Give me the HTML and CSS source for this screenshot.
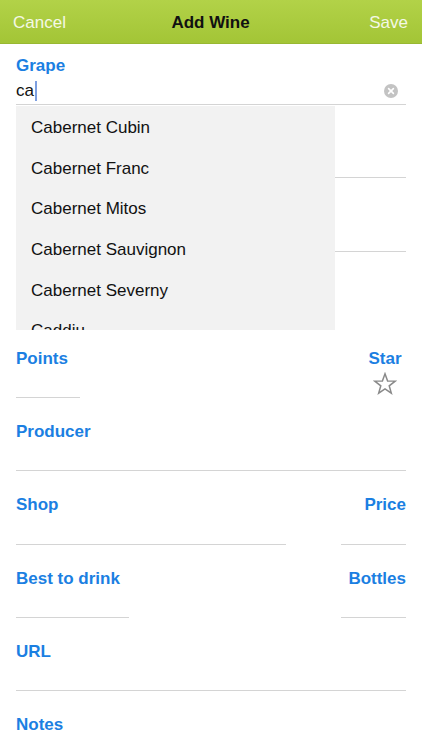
FILE: index.html
```html
<!DOCTYPE html>
<html>
<head>
<meta charset="utf-8">
<link rel="stylesheet" href="styles.css">
</head>
<body>
<div class="app">
  <header class="navbar">
    <span class="nav-btn nav-left">Cancel</span>
    <span class="nav-title">Add Wine</span>
    <span class="nav-btn nav-right">Save</span>
  </header>

  <main class="form">
    <div class="row row-first">
      <div class="field field-full">
        <div class="label">Grape</div>
        <div class="input input-first">
          <span class="value">ca</span><span class="caret"></span>
          <span class="spacer"></span>
          <svg class="clear" width="14" height="14" viewBox="0 0 14 14"><circle cx="7" cy="7" r="7" fill="#c3c3c3"/><path d="M4.6 4.6 L9.4 9.4 M9.4 4.6 L4.6 9.4" stroke="#fff" stroke-width="1.6" stroke-linecap="round"/></svg>
        </div>
      </div>
    </div>

    <div class="row">
      <div class="field field-full">
        <div class="label"></div>
        <div class="input"></div>
      </div>
    </div>

    <div class="row">
      <div class="field field-full">
        <div class="label"></div>
        <div class="input"></div>
      </div>
    </div>

    <div class="row">
      <div class="field field-short">
        <div class="label"></div>
        <div class="input"></div>
      </div>
    </div>

    <div class="row">
      <div class="field field-short">
        <div class="label">Points</div>
        <div class="input"></div>
      </div>
      <div class="field field-star">
        <div class="label">Star</div>
        <svg class="star" width="24" height="24" viewBox="0 0 24 24"><path d="M12 1.8 L14.6 8.9 L22.2 9.1 L16.2 13.8 L18.3 21.1 L12 16.8 L5.7 21.1 L7.8 13.8 L1.8 9.1 L9.4 8.9 Z" fill="none" stroke="#8a8a8a" stroke-width="1.5" stroke-linejoin="miter"/></svg>
      </div>
    </div>

    <div class="row">
      <div class="field field-full">
        <div class="label">Producer</div>
        <div class="input"></div>
      </div>
    </div>

    <div class="row">
      <div class="field field-shop">
        <div class="label">Shop</div>
        <div class="input"></div>
      </div>
      <div class="field field-right">
        <div class="label label-right">Price</div>
        <div class="input"></div>
      </div>
    </div>

    <div class="row">
      <div class="field field-best">
        <div class="label">Best to drink</div>
        <div class="input"></div>
      </div>
      <div class="field field-right">
        <div class="label label-right">Bottles</div>
        <div class="input"></div>
      </div>
    </div>

    <div class="row">
      <div class="field field-full">
        <div class="label">URL</div>
        <div class="input"></div>
      </div>
    </div>

    <div class="row">
      <div class="field field-full">
        <div class="label">Notes</div>
        <div class="input"></div>
      </div>
    </div>
  </main>

  <ul class="suggestions">
    <li>Cabernet Cubin</li>
    <li>Cabernet Franc</li>
    <li>Cabernet Mitos</li>
    <li>Cabernet Sauvignon</li>
    <li>Cabernet Severny</li>
    <li>Caddiu</li>
  </ul>
</div>
</body>
</html>
```

FILE: styles.css
```css
* { box-sizing: border-box; }

html, body {
  margin: 0;
  padding: 0;
  background: #ffffff;
}

body {
  font-family: "Liberation Sans", Arial, sans-serif;
  width: 422px;
  height: 750px;
  overflow: hidden;
}

.app {
  position: relative;
  width: 422px;
  height: 750px;
  overflow: hidden;
}

.navbar {
  height: 44px;
  display: grid;
  grid-template-columns: 1fr auto 1fr;
  align-items: center;
  padding: 2px 14px 0 13px;
  background: linear-gradient(#b2d248, #a3c536);
  border-bottom: 1px solid #98b832;
  font-size: 17px;
}

.nav-btn {
  color: #f4f8e6;
}

.nav-right {
  text-align: right;
}

.nav-title {
  font-weight: bold;
  color: #111;
}

.form {
  padding: 0 16px;
}

.row {
  display: flex;
  justify-content: space-between;
  align-items: flex-start;
  height: 73.25px;
  padding-top: 24px;
}

.row-first {
  height: 61px;
  padding-top: 12px;
}

.field {
  display: flex;
  flex-direction: column;
}

.field-full { width: 100%; }
.field-short { width: 64px; }
.field-shop { width: 270px; }
.field-best { width: 113px; }
.field-right { width: 65px; align-items: stretch; }
.field-star { align-items: center; width: 34px; margin-right: 4px; }

.label {
  height: 20px;
  font-size: 17px;
  line-height: 20px;
  font-weight: bold;
  color: #1b7fe2;
  white-space: nowrap;
}

.label-right {
  text-align: right;
}

.input {
  height: 29.25px;
  border-bottom: 1px solid #d4d4d4;
  display: flex;
  align-items: center;
  font-size: 17px;
  color: #111;
}

.input-first {
  height: 29px;
  padding-top: 1px;
}

.value {
  line-height: 20px;
}

.caret {
  display: inline-block;
  width: 2px;
  height: 20px;
  background: #7d9fe0;
  margin-left: 1px;
}

.spacer { flex: 1; }

.clear {
  margin-right: 8px;
}

.star {
  margin-top: 3px;
}

.suggestions {
  position: absolute;
  top: 106px;
  left: 16px;
  width: 319px;
  height: 224px;
  margin: 0;
  padding: 2px 0 0;
  list-style: none;
  background: #f2f2f2;
  overflow: hidden;
}

.suggestions li {
  height: 40.7px;
  line-height: 40.7px;
  padding-left: 15px;
  font-size: 17px;
  color: #111;
}
```
